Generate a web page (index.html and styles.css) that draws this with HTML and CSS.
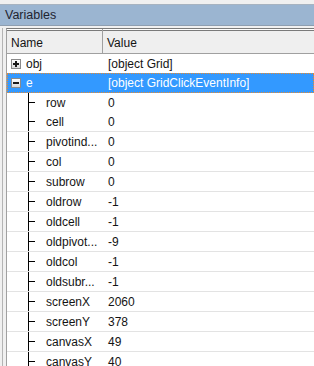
FILE: index.html
```html
<!DOCTYPE html>
<html lang="en">
<head>
    <meta charset="UTF-8">
    <title>Variables</title>
    <link rel="stylesheet" href="styles.css">
</head>
<body>
<div class="panel">
    <div class="title-bar">Variables</div>

    <div class="frame">
        <div class="grid-head">
            <div class="col-name">Name</div>
            <div class="col-value">Value</div>
        </div>

        <div class="grid-body">
            <div class="row">
                <div class="cell-name">
                    <span class="expander plus"></span>
                    <span>obj</span>
                </div>
                <div class="cell-value">[object Grid]</div>
            </div>
            <div class="row selected">
                <div class="cell-name">
                    <span class="expander minus"></span>
                    <span>e</span>
                </div>
                <div class="cell-value">[object GridClickEventInfo]</div>
            </div>

            <!-- e 의 하위 항목 -->
            <div class="children">
                <div class="row child"><div class="cell-name">row</div><div class="cell-value">0</div></div>
                <div class="row child"><div class="cell-name">cell</div><div class="cell-value">0</div></div>
                <div class="row child"><div class="cell-name">pivotind...</div><div class="cell-value">0</div></div>
                <div class="row child"><div class="cell-name">col</div><div class="cell-value">0</div></div>
                <div class="row child"><div class="cell-name">subrow</div><div class="cell-value">0</div></div>
                <div class="row child"><div class="cell-name">oldrow</div><div class="cell-value">-1</div></div>
                <div class="row child"><div class="cell-name">oldcell</div><div class="cell-value">-1</div></div>
                <div class="row child"><div class="cell-name">oldpivot...</div><div class="cell-value">-9</div></div>
                <div class="row child"><div class="cell-name">oldcol</div><div class="cell-value">-1</div></div>
                <div class="row child"><div class="cell-name">oldsubr...</div><div class="cell-value">-1</div></div>
                <div class="row child"><div class="cell-name">screenX</div><div class="cell-value">2060</div></div>
                <div class="row child"><div class="cell-name">screenY</div><div class="cell-value">378</div></div>
                <div class="row child"><div class="cell-name">canvasX</div><div class="cell-value">49</div></div>
                <div class="row child"><div class="cell-name">canvasY</div><div class="cell-value">40</div></div>
            </div>
        </div>
    </div>
</div>
</body>
</html>
```

FILE: styles.css
```css
* {
    margin: 0;
    padding: 0;
    box-sizing: border-box;
}

body {
    font-family: 'Liberation Sans', Arial, sans-serif;
    font-size: 12px;
    color: #141414;
    background: #f0f0f0;
    width: 314px;
    height: 366px;
    overflow: hidden;
}

.panel {
    padding-top: 4px;
    height: 366px;
    display: flex;
    flex-direction: column;
    overflow: hidden;
}

/* 타이틀 바 */
.title-bar {
    height: 22px;
    flex-shrink: 0;
    background: #9bb5d1;
    border-top: 1px solid #a7b3c0;
    border-bottom: 1px solid #8e9eb0;
    padding: 3px 0 0 5px;
    font-size: 12.5px;
    color: #1e2430;
}

/* 그리드 프레임 */
.frame {
    flex: 1;
    margin-top: 2px;
    margin-left: 2px;
    border-left: 1px solid #b4b4b4;
    padding-left: 3px;
    background: #f0f0f0;
    overflow: hidden;
}

.grid-body,
.grid-head {
    border-left: 1px solid #a0a0a0;
}

.grid-body {
    background: #ffffff;
    height: 100%;
}

.grid-head {
    display: flex;
    height: 26px;
    background: #efefef;
    border-top: 1px solid #7a7a7a;
    border-bottom: 1px solid #a0a0a0;
    box-shadow: inset 0 1px 0 #ffffff, inset 0 2px 0 #7a7a7a;
}

.col-name {
    width: 96px;
    border-right: 1px solid #a0a0a0;
    padding: 7px 0 0 4px;
}

.col-value {
    flex: 1;
    padding: 7px 0 0 4px;
}

.row {
    display: flex;
    height: 20px;
    align-items: center;
    border-bottom: 1px solid #e3e3e3;
    position: relative;
}

.row:first-child {
    height: 19px;
    border-bottom: none;
}

.cell-name {
    width: 96px;
    display: flex;
    align-items: center;
    padding-left: 4px;
    white-space: nowrap;
    overflow: hidden;
}

.cell-value {
    flex: 1;
    padding-left: 5px;
    white-space: nowrap;
}

.row.selected {
    background: #3399ff;
    color: #ffffff;
    border: 1px dotted #e88a2e;
}

.row.selected .cell-name {
    padding-left: 3px;
}

.row.selected .cell-value {
    padding-left: 4px;
}

/* +/- 확장 버튼 */
.expander {
    width: 10px;
    height: 10px;
    border: 1px solid #8a8a8a;
    background: linear-gradient(#ffffff, #d8d8d8);
    margin-right: 5px;
    position: relative;
}

.expander::before {
    content: '';
    position: absolute;
    left: 1px;
    top: 3px;
    width: 6px;
    height: 2px;
    background: #1a1a1a;
}

.expander.plus::after {
    content: '';
    position: absolute;
    left: 3px;
    top: 1px;
    width: 2px;
    height: 6px;
    background: #1a1a1a;
}

/* 트리 연결선 */
.children {
    position: relative;
}

.children::before {
    content: '';
    position: absolute;
    left: 21px;
    top: 0;
    bottom: 0;
    width: 1px;
    background: #000000;
}

.row.child .cell-name {
    padding-left: 39px;
}

.row.child::before {
    content: '';
    position: absolute;
    left: 21px;
    top: 9px;
    width: 7px;
    height: 1px;
    background: #000000;
}
```
